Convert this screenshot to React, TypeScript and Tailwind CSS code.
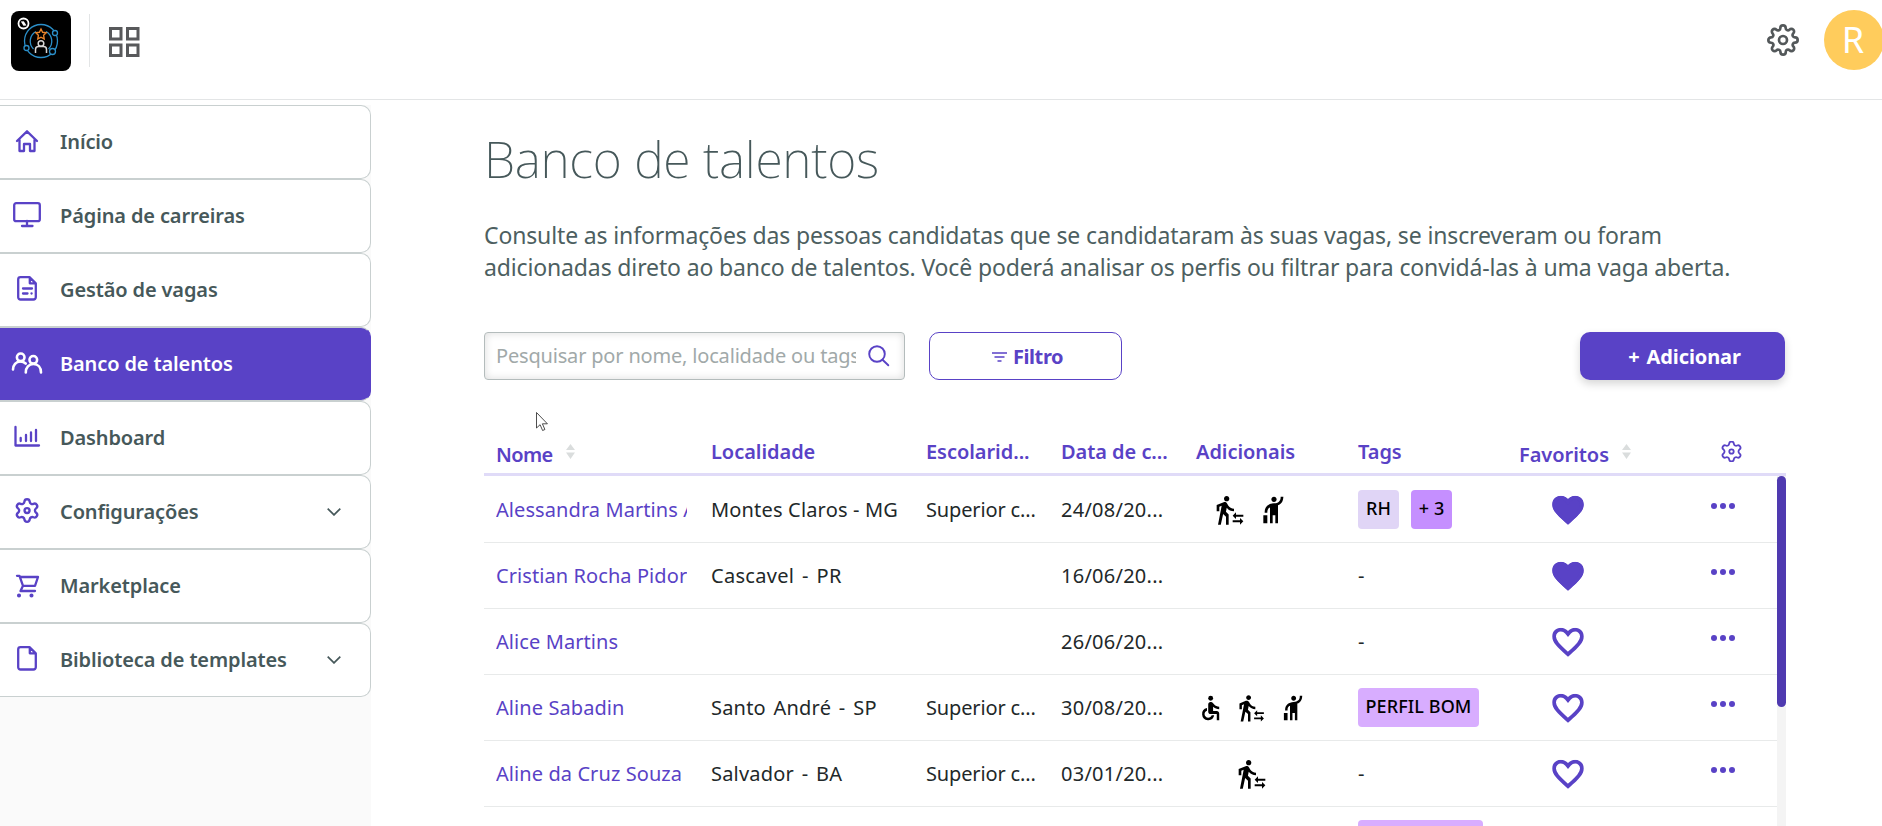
import type { ReactNode } from 'react'
import { FiSettings } from 'react-icons/fi'
import { MdAccessible, MdHail, MdTransferWithinAStation } from 'react-icons/md'

type Extra = 'pcd' | 'transfer' | 'travel'

interface Tag {
  label: string
  className: string
}

interface Candidate {
  name: string
  place: string
  placeClass?: string
  degree: string
  date: string
  extras: Extra[]
  tags: Tag[]
  favorite: boolean
}

const candidates: Candidate[] = [
  {
    name: 'Alessandra Martins Alves',
    place: 'Montes Claros - MG',
    placeClass: 'tracking-[0.17px]',
    degree: 'Superior c...',
    date: '24/08/20...',
    extras: ['transfer', 'travel'],
    tags: [
      { label: 'RH', className: 'w-[41px] bg-[#e0d5f6]' },
      { label: '+ 3', className: 'w-[41px] bg-[#c58fff]' },
    ],
    favorite: true,
  },
  { name: 'Cristian Rocha Pidor', place: 'Cascavel - PR', placeClass: 'tracking-[0.3px] [word-spacing:2.3px]', degree: '', date: '16/06/20...', extras: [], tags: [], favorite: true },
  { name: 'Alice Martins', place: '', degree: '', date: '26/06/20...', extras: [], tags: [], favorite: false },
  {
    name: 'Aline Sabadin',
    place: 'Santo André - SP',
    placeClass: 'tracking-[0.2px] [word-spacing:2.3px]',
    degree: 'Superior c...',
    date: '30/08/20...',
    extras: ['pcd', 'transfer', 'travel'],
    tags: [{ label: 'PERFIL BOM', className: 'w-[121px] bg-[#d8adff]' }],
    favorite: false,
  },
  { name: 'Aline da Cruz Souza', place: 'Salvador - BA', placeClass: 'tracking-[0.2px] [word-spacing:2.3px]', degree: 'Superior c...', date: '03/01/20...', extras: ['transfer'], tags: [], favorite: false },
]

const GEAR =
  'M9.671 4.136a2.34 2.34 0 0 1 4.659 0 2.34 2.34 0 0 0 3.319 1.915 2.34 2.34 0 0 1 2.33 4.033 2.34 2.34 0 0 0 0 3.831 2.34 2.34 0 0 1-2.33 4.033 2.34 2.34 0 0 0-3.319 1.915 2.34 2.34 0 0 1-4.659 0 2.34 2.34 0 0 0-3.32-1.915 2.34 2.34 0 0 1-2.33-4.033 2.34 2.34 0 0 0 0-3.831A2.34 2.34 0 0 1 6.35 6.051a2.34 2.34 0 0 0 3.319-1.915'

const HEART =
  'M12 21.350l-1.450-1.320C5.400 15.360 2 12.280 2 8.500 2 5.420 4.420 3 7.500 3c1.740 0 3.410.810 4.500 2.090C13.090 3.810 14.760 3 16.500 3 19.580 3 22 5.420 22 8.500c0 3.780-3.400 6.860-8.550 11.540L12 21.350z'

const COLS = 'grid grid-cols-[215px_215px_136px_134px_162px_162px_161px_1fr]'

/* ── Sidebar icons ── */
function MenuIcon({ children }: { children: ReactNode }) {
  return (
    <svg width="32" height="28" viewBox="0 0 32 28" fill="none" stroke="currentColor" strokeWidth="2.300" strokeLinecap="round" strokeLinejoin="round" className="shrink-0">
      {children}
    </svg>
  )
}

const homeIcon = (
  <MenuIcon>
    <path d="M6 13 16 3.300 26 13M8.500 11.500V23H13v-7h6v7h4.500V11.500" />
  </MenuIcon>
)
const monitorIcon = (
  <MenuIcon>
    <rect x="3.200" y="1.200" width="25.600" height="18" rx="2" />
    <path d="M16 19v4.500M11 24h10.500" />
  </MenuIcon>
)
const docIcon = (
  <MenuIcon>
    <path d="M18.500 1.200H9.500A2.300 2.300 0 0 0 7.200 3.500v17.700a2.300 2.300 0 0 0 2.300 2.300h13a2.300 2.300 0 0 0 2.300-2.300V7.300zM18.800 1.500v5.800h5.800M12 12.500h9M12 17.500h4.500M20.500 17.500h.1" />
  </MenuIcon>
)
const peopleIcon = (
  <MenuIcon>
    <g strokeWidth="2.600">
      <circle cx="9.700" cy="7.300" r="3.800" />
      <circle cx="22.300" cy="9.800" r="3.800" />
      <path d="M2 19.500c0-4.500 3-8 7.200-8 2.300 0 4.200.8 5.500 2M14.800 22.500c0-5 3-8.500 7.600-8.500s7.600 3.500 7.600 8.500" />
    </g>
  </MenuIcon>
)
const chartIcon = (
  <MenuIcon>
    <path d="M4.500 3v18.500H28M9.700 14V17M15 11V17M20 8.500V17M25 6v11" />
  </MenuIcon>
)
const gearIcon = (
  <MenuIcon>
    <g transform="translate(2.500 -1) scale(1.130)" strokeWidth="2.100">
      <path d={GEAR} />
      <circle cx="12" cy="12" r="2.200" />
    </g>
  </MenuIcon>
)
const cartIcon = (
  <MenuIcon>
    <path d="M6 3.800h2.500l3.500 10-2.500 5.200H24M9 5h18L24 13.800H12" />
    <circle cx="8" cy="23.500" r=".9" fill="currentColor" />
    <circle cx="20.500" cy="23.500" r=".9" fill="currentColor" />
  </MenuIcon>
)
const fileIcon = (
  <MenuIcon>
    <path d="M18.500 1.200H9.500A2.300 2.300 0 0 0 7.200 3.500v17.700a2.300 2.300 0 0 0 2.300 2.300h13a2.300 2.300 0 0 0 2.300-2.300V7.300zM18.800 1.500v5.800h5.800" />
  </MenuIcon>
)

const menu: { label: string; icon: ReactNode; active?: boolean; expandable?: boolean }[] = [
  { label: 'Início', icon: homeIcon },
  { label: 'Página de carreiras', icon: monitorIcon },
  { label: 'Gestão de vagas', icon: docIcon },
  { label: 'Banco de talentos', icon: peopleIcon, active: true },
  { label: 'Dashboard', icon: chartIcon },
  { label: 'Configurações', icon: gearIcon, expandable: true },
  { label: 'Marketplace', icon: cartIcon },
  { label: 'Biblioteca de templates', icon: fileIcon, expandable: true },
]

function Logo() {
  return (
    <svg width="60" height="60" viewBox="0 0 60 60" fill="none">
      <rect width="60" height="60" rx="8" fill="#000" />
      <g stroke="#2b8fc9" strokeWidth="1.300">
        <circle cx="30" cy="30" r="16.500" />
        <path d="M25 20.500a11 11 0 0 0-2.500 17.500M35 20.500a11 11 0 0 1 2.500 17.500" />
        <circle cx="44" cy="22" r="2.500" fill="#000" />
        <circle cx="15.500" cy="37" r="2.500" fill="#000" />
        <circle cx="41.500" cy="40.500" r="3" fill="#000" />
      </g>
      <path d="m30 18 1.600 3.300 3.600.5-2.600 2.500.6 3.600-3.200-1.700-3.200 1.700.6-3.600-2.600-2.500 3.600-.5z" stroke="#e8832a" strokeWidth="1.400" />
      <g stroke="#d5d5d5" strokeWidth="1.500">
        <circle cx="30" cy="32.500" r="2.800" />
        <path d="M24.500 42v-3.500a3 3 0 0 1 3-3h5a3 3 0 0 1 3 3V42" />
      </g>
      <circle cx="12.500" cy="12.500" r="5" stroke="#fff" strokeWidth="1.800" />
      <path d="m9.800 10.500 3-.3 2.700 4.300-3 .2z" fill="#fff" />
    </svg>
  )
}

function TopBar() {
  return (
    <header className="flex h-[100px] shrink-0 justify-between border-b border-[#e3e5e6] bg-white">
      <div className="flex items-start pt-[11px] pl-[11px]">
        <Logo />
        <div className="mt-[3px] ml-[18px] h-[53px] w-px bg-[#e3e5e6]" />
        <svg width="31" height="30" viewBox="0 0 31 30" fill="none" stroke="#58595b" strokeWidth="3" className="mt-4 ml-[19px]">
          <rect x="1.500" y="1.500" width="10.500" height="10.500" />
          <rect x="18.500" y="1.500" width="10.500" height="10.500" />
          <rect x="1.500" y="18" width="10.500" height="10.500" />
          <rect x="18.500" y="18" width="10.500" height="10.500" />
        </svg>
      </div>
      <div className="-mr-0.5 flex items-start gap-[25px] pt-2.5">
        <FiSettings size={32} className="mt-3.5 text-[#53585a]" />
        <div className="flex size-[60px] items-center justify-center rounded-full bg-[#ffcc5c] pr-0.5 text-4xl text-white">R</div>
      </div>
    </header>
  )
}

function Sidebar() {
  return (
    <aside className="mt-[5px] w-[371px] shrink-0 bg-[#fafafa]">
      {menu.map(item => (
        <div
          key={item.label}
          className={`flex h-[74px] items-center rounded-r-[10px] border border-l-0 border-[#c9d0d0] pr-[29px] pl-[11px] ${
            item.active ? 'border-r-[#5942c6] bg-[#5942c6] text-white' : 'bg-white text-[#5942c6]'
          }`}
        >
          {item.icon}
          <span className={`ml-[17px] flex-1 pb-px text-xl font-[570] tracking-[-0.13px] ${item.active ? 'text-white' : 'text-[#46585a]'}`}>
            {item.label}
          </span>
          {item.expandable && (
            <svg width="14" height="8" viewBox="0 0 14 8" fill="none" stroke="#46585a" strokeWidth="1.700">
              <path d="m.7.700 6.300 6.200L13.300.700" />
            </svg>
          )}
        </div>
      ))}
    </aside>
  )
}

function Sorter() {
  return (
    <svg width="9" height="15" viewBox="0 0 9 15" fill="#dadddd">
      <path d="M4.500 0 9 6H0zM4.500 15 9 8.500H0z" />
    </svg>
  )
}

function Heart({ filled }: { filled: boolean }) {
  return (
    <svg width="38" height="38" viewBox="0 0 24 24" fill={filled ? 'currentColor' : 'none'}>
      <clipPath id="heart">
        <path d={HEART} />
      </clipPath>
      <path d={HEART} stroke="currentColor" strokeWidth="4.800" clipPath="url(#heart)" />
    </svg>
  )
}

function ExtraIcon({ kind }: { kind: Extra }) {
  if (kind === 'pcd') return <MdAccessible size={32} />
  if (kind === 'transfer') return <MdTransferWithinAStation size={32} />
  return <MdHail size={32} />
}

function Toolbar() {
  return (
    <div className="mt-[49px] flex h-12 w-[1301px]">
      <label className="flex w-[421px] items-center rounded-[4px] border border-[#b4bcbc] pl-[11px] shadow-[inset_0_0_8px_rgba(0,0,0,0.14)]">
        <span className="w-[360px] overflow-hidden pb-px text-xl tracking-[-0.18px] whitespace-nowrap text-[#a1a9a9]">
          Pesquisar por nome, localidade ou tags
        </span>
        <svg width="22" height="22" viewBox="0 0 22 22" fill="none" stroke="#5942c6" strokeWidth="1.900" strokeLinecap="round" className="ml-3">
          <circle cx="9" cy="9" r="7.800" />
          <path d="m14.500 14.800 5.800 5.500" />
        </svg>
      </label>
      <button className="ml-6 flex w-[193px] items-center justify-center gap-1.5 rounded-[10px] border border-[#5942c6] pt-0.5 pl-1 text-[#5942c6]">
        <svg width="15" height="10" viewBox="0 0 15 10" stroke="currentColor" strokeWidth="1.500">
          <path d="M0 1h15M2.500 5h10M5.500 9h4" />
        </svg>
        <span className="text-xl font-bold tracking-[-0.4px]">Filtro</span>
      </button>
      <button className="ml-auto flex w-[205px] items-center justify-center gap-[7px] rounded-[10px] bg-[#5942c6] pt-0.5 pl-1 text-xl font-bold tracking-[-0.1px] text-white shadow-[0_4px_8px_rgba(0,0,0,0.16)]">
        <span>+</span>
        <span>Adicionar</span>
      </button>
    </div>
  )
}

function TableHead() {
  return (
    <div className={`${COLS} h-[51px] items-center border-b-[3px] border-[#e0dbf8] pt-[5px] text-xl font-[580] tracking-[-0.05px] text-[#5942c6] *:pl-3`}>
      <div className="flex items-center gap-[13px]">
        <span className="pt-1.5 tracking-[-0.6px]">Nome</span>
        <Sorter />
      </div>
      <div>Localidade</div>
      <div>Escolarid...</div>
      <div className="pl-[11px]!">Data de c...</div>
      <div>Adicionais</div>
      <div>Tags</div>
      <div className="flex items-center gap-[13px] pl-[11px]!">
        <span className="pt-1.5">Favoritos</span>
        <Sorter />
      </div>
      <div className="flex justify-center pr-1">
        <svg width="21" height="21" viewBox="1.500 1.500 21 21" fill="none" stroke="currentColor" strokeWidth="1.800">
          <path d={GEAR} />
          <circle cx="12" cy="12" r="2.200" />
        </svg>
      </div>
    </div>
  )
}

function CandidateRow({ c }: { c: Candidate }) {
  return (
    <div className={`${COLS} h-[66px] shrink-0 items-center border-b border-[#e8eaea] text-xl text-[#222829] *:px-3`}>
      <div className="text-[#5942c6]">
        <div className="overflow-hidden tracking-[0.08px] whitespace-nowrap">{c.name}</div>
      </div>
      <div className={`whitespace-nowrap ${c.placeClass ?? ''}`}>{c.place}</div>
      <div className="tracking-[-0.15px] whitespace-nowrap">{c.degree}</div>
      <div className="pl-[11px]! tracking-[0.25px] whitespace-nowrap">{c.date}</div>
      <div className="flex justify-center gap-3 pr-[38px]! text-black">
        {c.extras.map(kind => (
          <ExtraIcon key={kind} kind={kind} />
        ))}
      </div>
      <div className="flex gap-3 pb-px">
        {c.tags.length === 0 && <span className="pt-0.5 tracking-[1px]">-</span>}
        {c.tags.map(tag => (
          <span key={tag.label} className={`flex h-[39px] shrink-0 items-center justify-center rounded-[4px] pb-0.5 text-lg font-[540] tracking-[0.1px] whitespace-nowrap text-black ${tag.className}`}>
            {tag.label}
          </span>
        ))}
      </div>
      <div className="pl-[41px]! text-[#5942c6]">
        <Heart filled={c.favorite} />
      </div>
      <div className="pb-2 pl-[42px]!">
        <svg width="24" height="6" viewBox="0 0 24 6" fill="#5942c6">
          <circle cx="3" cy="3" r="3" />
          <circle cx="12" cy="3" r="3" />
          <circle cx="21" cy="3" r="3" />
        </svg>
      </div>
    </div>
  )
}

export default function App() {
  return (
    <div className="flex h-screen flex-col overflow-hidden bg-white font-['Noto_Sans',sans-serif]">
      <TopBar />
      <div className="flex min-h-0 flex-1">
        <Sidebar />
        <main className="relative flex min-w-0 flex-1 flex-col pl-[113px]">
          <h1 className="mt-[29px] text-[50px] leading-[60px] font-extralight tracking-[-0.3px] text-[#46585a]">Banco de talentos</h1>
          <p className="mt-[30px] text-[23px] leading-8 tracking-[-0.14px] whitespace-nowrap text-[#4d5f61]">
            Consulte as informações das pessoas candidatas que se candidataram às suas vagas, se inscreveram ou foram
            <br />
            adicionadas direto ao banco de talentos. Você poderá analisar os perfis ou filtrar para convidá-las à uma vaga aberta.
          </p>
          <Toolbar />
          <section className="mt-[45px] flex min-h-0 w-[1302px] flex-1 flex-col">
            <TableHead />
            <div className="flex min-h-0 flex-1">
              <div className="flex flex-1 flex-col overflow-hidden pt-px">
                {candidates.map(c => (
                  <CandidateRow key={c.name} c={c} />
                ))}
                {/* next row, only the top of its tag is in view */}
                <div className="h-[66px] shrink-0 pt-[13px] pl-[874px]">
                  <div className="h-[39px] w-[125px] rounded-[4px] bg-[#d8adff]" />
                </div>
              </div>
              <div className="w-[9px] bg-[#f4f4f4]">
                <div className="h-[231px] rounded-full bg-[#4f3ab0]" />
              </div>
            </div>
          </section>
          {/* mouse pointer */}
          <svg width="13" height="20" viewBox="0 0 13 20" className="absolute top-[312px] left-[165px]">
            <path d="M.5.500v15.500l3.600-3.300 2.500 5.800 2.300-1-2.500-5.700h5z" fill="#fff" stroke="#222" strokeWidth=".8" />
          </svg>
        </main>
      </div>
    </div>
  )
}
